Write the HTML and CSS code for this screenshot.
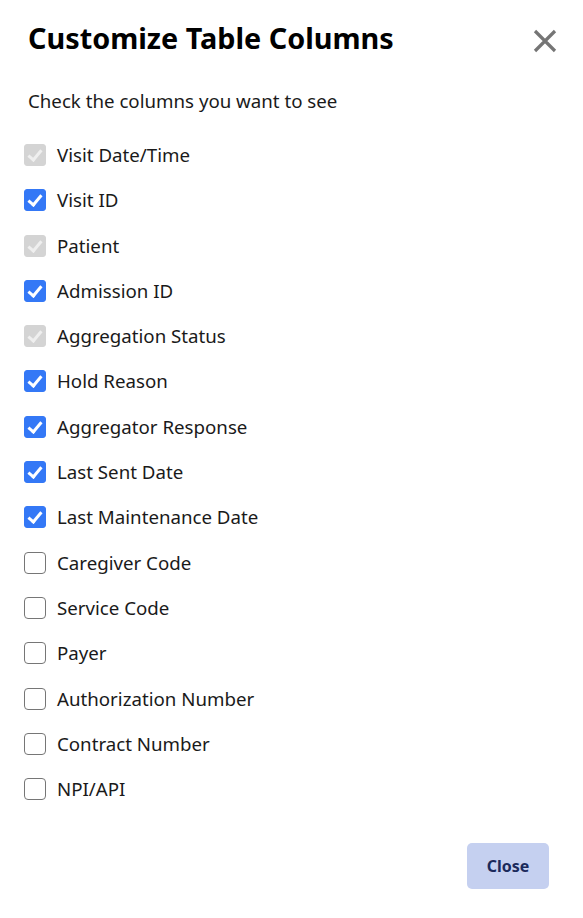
FILE: index.html
```html
<!DOCTYPE html>
<html lang="en">
<head>
    <meta charset="UTF-8">
    <meta name="viewport" content="width=device-width, initial-scale=1.0">
    <title>Customize Table Columns</title>
    <link rel="stylesheet" href="styles.css">
</head>
<body>
    <div class="modal">
        <div class="modal-header">
            <h1 class="modal-title">Customize Table Columns</h1>
            <button class="modal-close" aria-label="Close">
                <svg width="24" height="24" viewBox="0 0 24 24">
                    <path d="M2 2 L22 22 M22 2 L2 22" stroke="#757575" stroke-width="3.2" fill="none"/>
                </svg>
            </button>
        </div>
        <p class="modal-hint">Check the columns you want to see</p>
        <div class="column-list">
            <label class="column-item"><input type="checkbox" checked disabled> Visit Date/Time</label>
            <label class="column-item"><input type="checkbox" checked> Visit ID</label>
            <label class="column-item"><input type="checkbox" checked disabled> Patient</label>
            <label class="column-item"><input type="checkbox" checked> Admission ID</label>
            <label class="column-item"><input type="checkbox" checked disabled> Aggregation Status</label>
            <label class="column-item"><input type="checkbox" checked> Hold Reason</label>
            <label class="column-item"><input type="checkbox" checked> Aggregator Response</label>
            <label class="column-item"><input type="checkbox" checked> Last Sent Date</label>
            <label class="column-item"><input type="checkbox" checked> Last Maintenance Date</label>
            <label class="column-item"><input type="checkbox"> Caregiver Code</label>
            <label class="column-item"><input type="checkbox"> Service Code</label>
            <label class="column-item"><input type="checkbox"> Payer</label>
            <label class="column-item"><input type="checkbox"> Authorization Number</label>
            <label class="column-item"><input type="checkbox"> Contract Number</label>
            <label class="column-item"><input type="checkbox"> NPI/API</label>
        </div>
        <div class="modal-footer">
            <button class="btn-close">Close</button>
        </div>
    </div>
</body>
</html>
```

FILE: styles.css
```css
body {
    margin: 0;
    background-color: #ffffff;
    font-family: "Noto Sans", "Open Sans", sans-serif;
    color: #1a1a1a;
}
.modal {
    padding: 18px 26px 29px 24px;
}
.modal-header {
    display: flex;
    justify-content: space-between;
    align-items: center;
    padding-left: 4px;
}
.modal-title {
    margin: 0;
    font-size: 28.8px;
    font-weight: 700;
    color: #000;
    line-height: 40px;
}
.modal-close {
    border: none;
    background: none;
    padding: 0;
    width: 24px;
    height: 24px;
    margin-top: 6px;
    cursor: pointer;
}
.modal-hint {
    margin: 30px 0 28px 4px;
    font-size: 18.7px;
    line-height: 26px;
}
.column-list {
    display: flex;
    flex-direction: column;
    gap: 19.3px;
}
.column-item {
    display: flex;
    align-items: center;
    font-size: 18.7px;
    line-height: 26px;
    cursor: pointer;
}
/* custom checkbox */
.column-item input[type="checkbox"] {
    -webkit-appearance: none;
    appearance: none;
    width: 22px;
    height: 22px;
    margin: 0 11px 0 0;
    border: 1.5px solid #767676;
    border-radius: 4px;
    background: #fff;
    position: relative;
    flex-shrink: 0;
    cursor: pointer;
}
.column-item input[type="checkbox"]:checked {
    background: #3478f6;
    border-color: #3478f6;
    border-radius: 3px;
}
.column-item input[type="checkbox"]:disabled {
    background: #d4d4d4;
    border-color: #d4d4d4;
    cursor: default;
}
.column-item input[type="checkbox"]:checked::before {
    content: '';
    position: absolute;
    left: 6px;
    top: 2px;
    width: 5px;
    height: 11px;
    border: solid #fff;
    border-width: 0 3.5px 3.5px 0;
    transform: rotate(40deg);
}
.column-item input[type="checkbox"]:disabled::before {
    border-color: #efefef;
}
.modal-footer {
    display: flex;
    justify-content: flex-end;
    margin-top: 41px;
    padding-right: 8px;
}
.btn-close {
    width: 82px;
    height: 46px;
    border: none;
    border-radius: 5px;
    background-color: #c5d0f0;
    color: #1b2a5c;
    font-family: "Noto Sans", "Open Sans", sans-serif;
    font-size: 16px;
    font-weight: 700;
    cursor: pointer;
}
```
